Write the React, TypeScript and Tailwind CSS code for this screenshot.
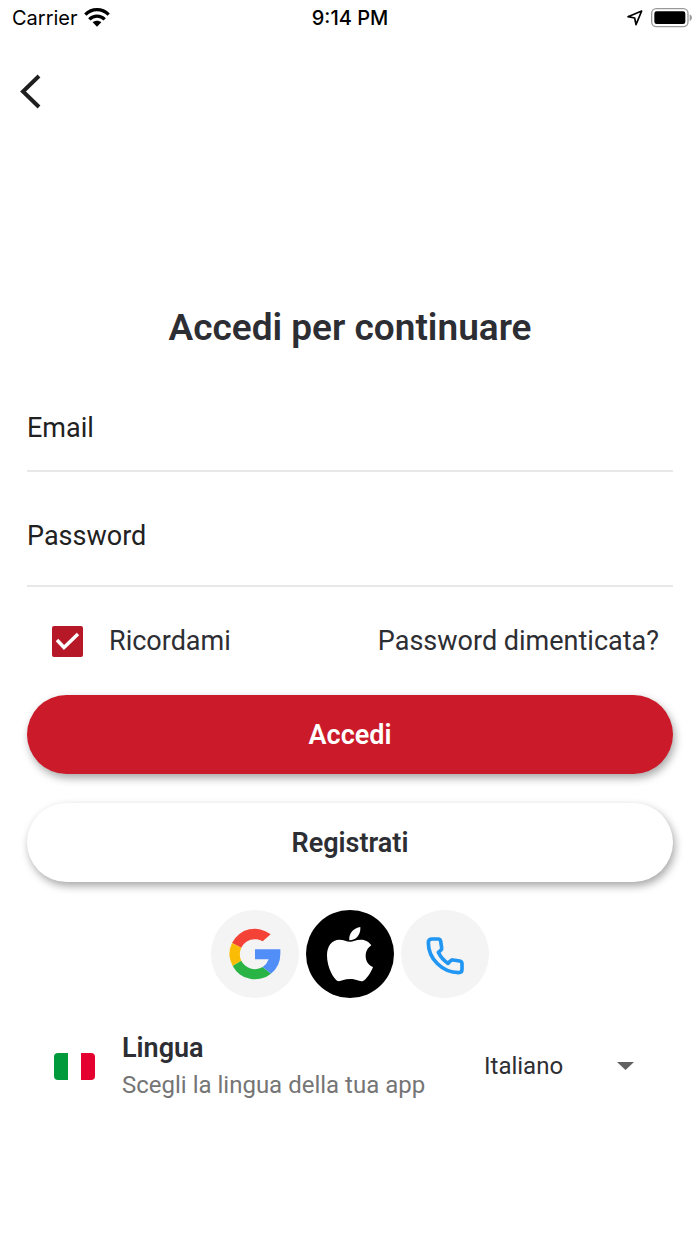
import { useState } from 'react';

const languages = ['Italiano', 'English', 'Deutsch'];

function WifiIcon() {
  return (
    <svg className="w-[26px] h-5" viewBox="0 0 78 60" fill="none" stroke="black" strokeWidth={10}>
      <path d="M4 20C24 0 54 0 74 20" />
      <path d="M16 34C29 21 49 21 62 34" />
      <path d="M26 43C34 37 44 37 52 43L39 56Z" fill="black" stroke="none" />
    </svg>
  );
}

function LocationIcon() {
  return (
    <svg className="w-4 h-4" viewBox="0 0 48 48" fill="none" stroke="black" strokeWidth={5} strokeLinejoin="round">
      <path d="M44 3L27 44L23 24L3 20Z" />
    </svg>
  );
}

function BatteryIcon() {
  return (
    <svg className="w-[41px] h-5" viewBox="0 0 123 60">
      <rect x="2" y="2" width="109" height="54" rx="14" fill="none" stroke="#999999" strokeWidth={4} />
      <rect x="10" y="10" width="93" height="38" rx="7" fill="black" />
      <path d="M116 19C125 24 125 34 116 39Z" fill="#999999" />
    </svg>
  );
}

function GoogleIcon() {
  return (
    <svg className="w-full h-full" viewBox="0 0 264 264">
      <path fill="#f44336" d="M63 99A76 76 0 0 1 179 73L155 94A45 45 0 0 0 91 113Z" />
      <path fill="#fbbc05" d="M63 99A76 76 0 0 0 65 168L91 152A45 45 0 0 1 91 113Z" />
      <path fill="#2bb446" d="M65 168A76 76 0 0 0 180 191L155 171A45 45 0 0 1 91 152Z" />
      <path fill="#518ef8" d="M132 118H208V132A76 76 0 0 1 180 191L155 171A45 45 0 0 0 173 148H132Z" />
    </svg>
  );
}

function AppleIcon() {
  return (
    <svg className="w-full h-full" viewBox="0 0 264 264" fill="white">
      <path d="M132 95C122 95 114 89 100 89C78 89 63 108 63 136C63 172 82 205 93 212C102 217 112 207 132 207C152 207 160 216 171 213C181 208 195 188 201 171C187 165 179 153 179 137C179 123 186 113 196 106C188 94 175 89 165 89C150 89 141 95 132 95Z" />
      <path d="M163 51C165 74 150 91 130 91C127 70 144 53 163 51Z" />
    </svg>
  );
}

function PhoneIcon() {
  return (
    <svg className="w-full h-full" viewBox="0 0 264 264" fill="none" stroke="#2196f3" strokeWidth={11} strokeLinejoin="round">
      <path d="M93 87H111Q118 87 119 94L122 113Q123 118 119 121L112 127Q122 148 141 160L148 153Q152 149 157 150L176 153Q183 154 183 161V178Q183 188 173 188C125 188 82 147 82 98Q82 87 93 87Z" />
    </svg>
  );
}

export default function App() {
  const [email, setEmail] = useState('');
  const [password, setPassword] = useState('');
  const [remember, setRemember] = useState(true);
  const [language, setLanguage] = useState('Italiano');

  return (
    <div className="min-h-screen bg-white font-['Roboto',sans-serif] text-[#2d2e33]">
      {/* Status bar */}
      <div className="grid grid-cols-3 items-center h-9 px-2 font-['Inter',sans-serif] text-xl leading-9 text-black">
        <div className="flex items-center gap-1.5 pl-1">
          <span>Carrier</span>
          <WifiIcon />
        </div>
        <span className="text-center font-medium">9:14 PM</span>
        <div className="flex items-center justify-end gap-2">
          <LocationIcon />
          <BatteryIcon />
        </div>
      </div>

      <button type="button" aria-label="Indietro" className="block mt-8 ml-4 p-1">
        <svg className="w-6 h-10" viewBox="0 0 24 40" fill="none" stroke="#1f1f1f" strokeWidth={4}>
          <path d="M19 4L3 19.500L19 35" />
        </svg>
      </button>

      <main className="px-[27px]">
        <h1 className="mt-[184px] text-center text-[37px] leading-[56px] font-semibold">Accedi per continuare</h1>

        <form onSubmit={(e) => e.preventDefault()}>
          <input
            type="email"
            aria-label="Email"
            placeholder="Email"
            value={email}
            onChange={(e) => setEmail(e.target.value)}
            className="block w-full mt-[29px] h-[87px] border-b-2 border-[#e8e8e8] text-[27px] text-[#212121] placeholder:text-[#212121] outline-none"
          />
          <input
            type="password"
            aria-label="Password"
            placeholder="Password"
            value={password}
            onChange={(e) => setPassword(e.target.value)}
            className="block w-full mt-3.5 h-[101px] border-b-2 border-[#e8e8e8] text-[27px] text-[#212121] placeholder:text-[#212121] outline-none"
          />

          <div className="flex items-center justify-between h-[108px] pl-[25px] pr-3.5 text-[27px]">
            <label className="flex items-center gap-[26px]">
              <span className="grid">
                <input
                  type="checkbox"
                  checked={remember}
                  onChange={(e) => setRemember(e.target.checked)}
                  className="appearance-none col-start-1 row-start-1 w-[31px] h-[31px] rounded-xs border-2 border-[#b71827] checked:bg-[#b71827]"
                />
                {remember && (
                  <svg className="col-start-1 row-start-1 w-[31px] h-[31px] pointer-events-none" viewBox="0 0 31 31" fill="none" stroke="white" strokeWidth={3.5}>
                    <path d="M5 14L12 21.500L26 8" />
                  </svg>
                )}
              </span>
              Ricordami
            </label>
            <a href="#password">Password dimenticata?</a>
          </div>

          <button type="submit" className="block w-full h-[79px] pt-0.5 rounded-full bg-[#cb1b2a] text-white text-[27px] font-semibold shadow-[2px_4px_8px_rgba(0,0,0,0.35)]">
            Accedi
          </button>
          <button type="button" className="block w-full h-[79px] mt-[29px] pt-0.5 rounded-full bg-white text-[27px] font-semibold shadow-[2px_4px_8px_rgba(0,0,0,0.35)]">
            Registrati
          </button>
        </form>

        <div className="flex justify-center gap-[7px] mt-7">
          <button type="button" aria-label="Google" className="w-[88px] h-[88px] rounded-full bg-[#f4f4f4]">
            <GoogleIcon />
          </button>
          <button type="button" aria-label="Apple" className="w-[88px] h-[88px] rounded-full bg-black">
            <AppleIcon />
          </button>
          <button type="button" aria-label="Telefono" className="w-[88px] h-[88px] rounded-full bg-[#f4f4f4]">
            <PhoneIcon />
          </button>
        </div>

        <div className="flex items-center mt-[31px] px-[27px]">
          <svg className="w-[41px] h-[27px] rounded-sm" viewBox="0 0 41 27">
            <rect width="14" height="27" fill="#009a3d" />
            <rect x="27" width="14" height="27" fill="#e4002f" />
          </svg>
          <div className="ml-[27px]">
            <label htmlFor="language" className="block text-[27px] leading-[38px] font-semibold">Lingua</label>
            <p className="text-2xl leading-9 text-[#757575]">Scegli la lingua della tua app</p>
          </div>
          <div className="grid items-center ml-auto w-[162px]">
            <select
              id="language"
              value={language}
              onChange={(e) => setLanguage(e.target.value)}
              className="appearance-none col-start-1 row-start-1 w-full h-12 bg-transparent text-2xl outline-none"
            >
              {languages.map((name) => (
                <option key={name}>{name}</option>
              ))}
            </select>
            <svg className="col-start-1 row-start-1 justify-self-end mr-3 w-[17px] h-2 pointer-events-none" viewBox="0 0 17 8">
              <path d="M0 0H17L8.500 8Z" fill="#616161" />
            </svg>
          </div>
        </div>
      </main>
    </div>
  );
}
